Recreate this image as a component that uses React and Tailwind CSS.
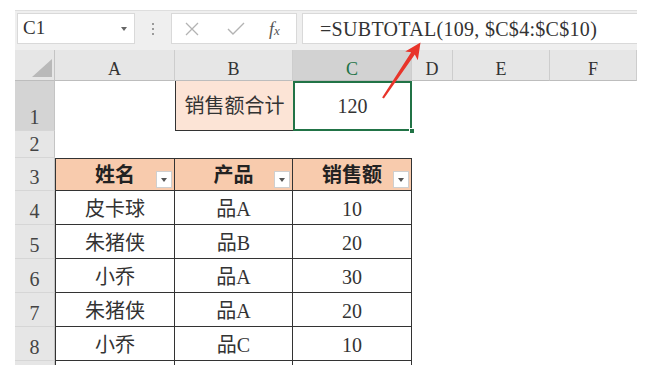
import React from "react";

const rows = [
  { n: "4", name: "皮卡球", prod: "品A", amt: "10" },
  { n: "5", name: "朱猪侠", prod: "品B", amt: "20" },
  { n: "6", name: "小乔", prod: "品A", amt: "30" },
  { n: "7", name: "朱猪侠", prod: "品A", amt: "20" },
  { n: "8", name: "小乔", prod: "品C", amt: "10" },
];

function RowHead({ children, selected }) {
  return (
    <div
      className={
        "flex items-end justify-center pb-[3px] leading-none text-[20px] text-[#444] border-r border-b border-r-[#c4c4c4] border-b-[#d6d6d6] " +
        (selected ? "bg-[#d4d4d4]" : "bg-[#e6e6e6]")
      }
    >
      {children}
    </div>
  );
}

function ColHead({ children, selected }) {
  return (
    <div
      className={
        "flex items-center justify-center pt-[8px] text-[18px] border-r border-b border-r-[#cdcdcd] border-b-[#bdbdbd] " +
        (selected ? "bg-[#d2d2d2] text-[#217346]" : "bg-[#e6e6e6] text-[#333]")
      }
    >
      {children}
    </div>
  );
}

function FilterBtn() {
  return (
    <div className="absolute right-[2px] bottom-[2px] w-[16px] h-[17px] bg-white border border-[#cfcfcf] flex items-center justify-center">
      <div className="w-0 h-0 border-l-[3px] border-r-[3px] border-t-[4px] border-l-transparent border-r-transparent border-t-[#555]" />
    </div>
  );
}

function HeadCell({ children, first }) {
  return (
    <div
      className={
        "relative flex items-center justify-center bg-[#f8cbad] font-bold text-[20px] text-[#222] border-t border-r border-b border-[#333] " +
        (first ? "border-l" : "")
      }
    >
      <span className="mt-[1px]">{children}</span>
      <FilterBtn />
    </div>
  );
}

function DataCell({ children, first }) {
  return (
    <div
      className={
        "flex items-center justify-center pt-[2px] bg-white text-[20px] text-[#333] border-r border-b border-[#333] " +
        (first ? "border-l" : "")
      }
    >
      {children}
    </div>
  );
}

function Blank() {
  return <div className="bg-white" />;
}

export default function App() {
  return (
    <div className="relative w-[665px] h-[365px] bg-white overflow-hidden font-['Liberation_Serif','Noto_Sans_CJK_SC',serif]">
      <div className="pt-[10px] pl-[15px]">
        {/* formula bar */}
        <div className="w-[622px] h-[40px] bg-[#efefef] flex items-start pt-[2px] border-t border-[#dedede]">
          <div className="ml-[2px] w-[118px] h-[31px] bg-white border border-[#d9d9d9] flex items-center justify-between pl-[5px] pr-[7px]">
            <span className="text-[19px] text-[#333]">C1</span>
            <div className="w-0 h-0 border-l-[3px] border-r-[3px] border-t-[4px] border-l-transparent border-r-transparent border-t-[#666]" />
          </div>
          <div className="w-[36px] h-[31px] flex flex-col items-center justify-center gap-[3px]">
            <span className="w-[2px] h-[2px] bg-[#9a9a9a]" />
            <span className="w-[2px] h-[2px] bg-[#9a9a9a]" />
            <span className="w-[2px] h-[2px] bg-[#9a9a9a]" />
          </div>
          <div className="w-[126px] h-[31px] bg-white border border-[#d9d9d9] flex items-center pl-[13px]">
            <svg width="14" height="14" viewBox="0 0 14 14" className="text-[#b3b3b3]">
              <path d="M1 1 L13 13 M13 1 L1 13" stroke="currentColor" strokeWidth="1.3" fill="none" />
            </svg>
            <svg width="18" height="14" viewBox="0 0 18 14" className="ml-[28px] text-[#b3b3b3]">
              <path d="M1 7 L6 12 L17 1" stroke="currentColor" strokeWidth="1.4" fill="none" />
            </svg>
            <span className="ml-[24px] italic text-[18px] text-[#555] leading-none">
              f<span className="text-[13px]">x</span>
            </span>
          </div>
          <div className="ml-[5px] flex-1 h-[31px] bg-white border-y border-l border-[#d9d9d9] flex items-center pl-[17px]">
            <span className="text-[20px] text-[#333] tracking-[0.3px]">=SUBTOTAL(109, $C$4:$C$10)</span>
          </div>
        </div>

        {/* sheet */}
        <div className="grid grid-cols-[40px_120px_118px_119px_41px_97px_87px] grid-rows-[31px_50px_27px_33px_34px_34px_34px_34px_34px_30px]">
          <div className="relative bg-[#e6e6e6] border-r border-b border-r-[#c4c4c4] border-b-[#bdbdbd]">
            <svg width="20" height="18" viewBox="0 0 20 18" className="absolute right-[2px] bottom-[3px]">
              <polygon points="20,0 20,18 0,18" fill="#b9b9b9" />
            </svg>
          </div>
          <ColHead>A</ColHead>
          <ColHead>B</ColHead>
          <ColHead selected>C</ColHead>
          <ColHead>D</ColHead>
          <ColHead>E</ColHead>
          <ColHead>F</ColHead>

          {/* row 1 */}
          <RowHead selected>1</RowHead>
          <Blank />
          <div className="flex items-center justify-center bg-[#fce4d6] border-l border-b border-[#333] text-[20px] text-[#333]">
            销售额合计
          </div>
          <div className="relative flex items-center justify-center bg-white border-2 border-[#217346] text-[20px] text-[#333]">
            120
            <div className="absolute right-[-5px] bottom-[-5px] w-[6px] h-[6px] bg-[#217346] border border-white" />
          </div>
          <Blank />
          <Blank />
          <Blank />

          {/* row 2 */}
          <RowHead>2</RowHead>
          <Blank />
          <Blank />
          <Blank />
          <Blank />
          <Blank />
          <Blank />

          {/* row 3 */}
          <RowHead>3</RowHead>
          <HeadCell first>姓名</HeadCell>
          <HeadCell>产品</HeadCell>
          <HeadCell>销售额</HeadCell>
          <Blank />
          <Blank />
          <Blank />

          {rows.map((r) => (
            <React.Fragment key={r.n}>
              <RowHead>{r.n}</RowHead>
              <DataCell first>{r.name}</DataCell>
              <DataCell>{r.prod}</DataCell>
              <DataCell>{r.amt}</DataCell>
              <Blank />
              <Blank />
              <Blank />
            </React.Fragment>
          ))}

          {/* row 9, cut off at the bottom */}
          <RowHead />
          <DataCell first />
          <DataCell />
          <DataCell />
          <Blank />
          <Blank />
          <Blank />
        </div>
      </div>

      {/* red arrow pointing to the formula */}
      <svg width="665" height="365" className="absolute left-0 top-0 pointer-events-none">
        <polygon
          points="383.9,98.5 414.8,54.6 417.8,60.2 420.5,42.5 405.2,51.6 411.2,52.2 382.1,97.5"
          fill="#e8342a"
        />
      </svg>
    </div>
  );
}
